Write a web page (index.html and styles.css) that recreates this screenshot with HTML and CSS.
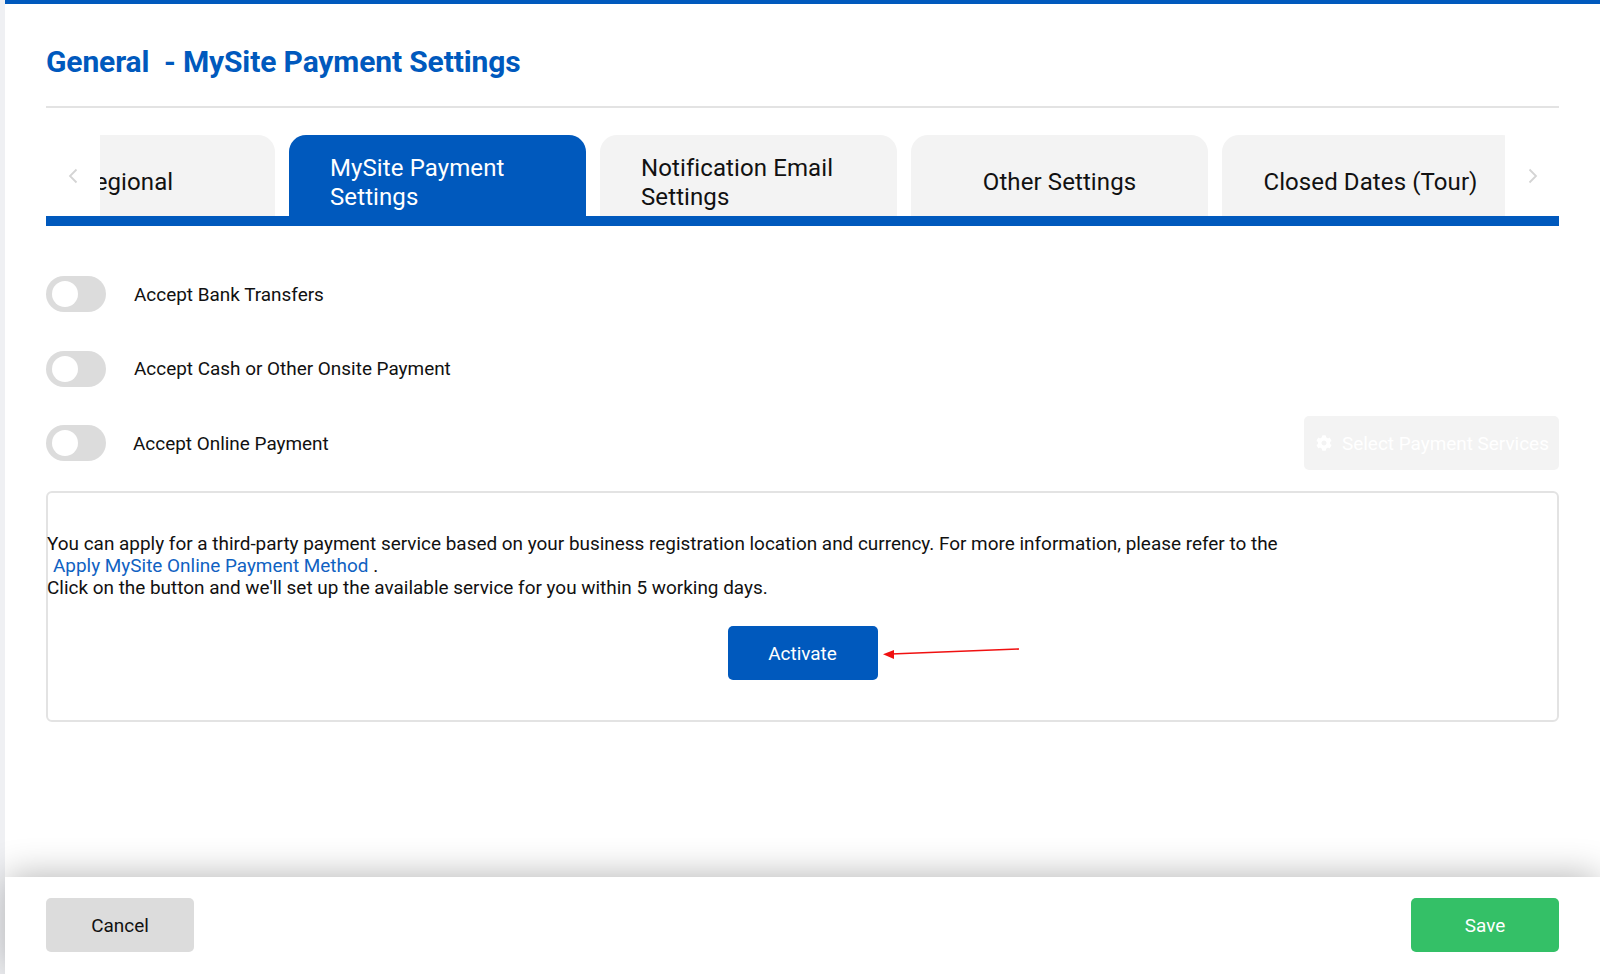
FILE: index.html
```html
<!DOCTYPE html>
<html lang="en">
<head>
  <meta charset="UTF-8" />
  <meta name="viewport" content="width=device-width, initial-scale=1.0"/>
  <title>MySite Payment Settings</title>
  <link rel="stylesheet" href="styles.css">
</head>
<body>
  <div class="panel">
    <div class="content">
      <h1 class="title">General &nbsp;- MySite Payment Settings</h1>

      <div class="tabs">
        <button class="tab-arrow">
          <svg width="10" height="16" viewBox="0 0 10 16"><path d="M8.5 1.5 2 8l6.5 6.5" fill="none" stroke="#d4d4d4" stroke-width="1.8"/></svg>
        </button>
        <div class="tab-window">
          <div class="tab-track">
            <div class="tab">Regional</div>
            <div class="tab active"><span>MySite Payment Settings</span></div>
            <div class="tab"><span>Notification Email Settings</span></div>
            <div class="tab">Other Settings</div>
            <div class="tab">Closed Dates (Tour)</div>
          </div>
        </div>
        <button class="tab-arrow">
          <svg width="10" height="16" viewBox="0 0 10 16"><path d="M1.5 1.5 8 8l-6.5 6.5" fill="none" stroke="#d4d4d4" stroke-width="1.8"/></svg>
        </button>
      </div>

      <div class="option">
        <span class="toggle"></span>
        <label>Accept Bank Transfers</label>
      </div>
      <div class="option">
        <span class="toggle"></span>
        <label>Accept Cash or Other Onsite Payment</label>
      </div>
      <div class="option online">
        <span class="toggle"></span>
        <label>Accept Online Payment</label>
        <button class="select-btn">
          <svg width="16" height="16" viewBox="0 0 512 512"><path fill="#fff" d="M487.4 315.7l-42.6-24.6c4.3-23.2 4.3-47 0-70.2l42.6-24.6c4.9-2.8 7.1-8.6 5.5-14-11.1-35.6-30-67.8-54.7-94.6-3.8-4.1-10-5.1-14.8-2.3L380.8 110c-17.9-15.4-38.5-27.3-60.8-35.1V25.8c0-5.6-3.9-10.5-9.4-11.7-36.7-8.2-74.3-7.8-109.2 0-5.5 1.2-9.4 6.1-9.4 11.7V75c-22.2 7.9-42.8 19.8-60.8 35.1L88.7 85.5c-4.9-2.8-11-1.9-14.8 2.3-24.7 26.7-43.6 58.9-54.7 94.6-1.7 5.4.6 11.2 5.5 14L67.3 221c-4.3 23.2-4.3 47 0 70.2l-42.6 24.6c-4.9 2.8-7.1 8.6-5.5 14 11.1 35.6 30 67.8 54.7 94.6 3.8 4.1 10 5.1 14.8 2.3l42.6-24.6c17.9 15.4 38.5 27.3 60.8 35.1v49.2c0 5.6 3.9 10.5 9.4 11.7 36.7 8.2 74.3 7.8 109.2 0 5.5-1.2 9.4-6.1 9.4-11.7v-49.2c22.2-7.9 42.8-19.8 60.8-35.1l42.6 24.6c4.9 2.8 11 1.9 14.8-2.3 24.7-26.7 43.6-58.9 54.7-94.6 1.5-5.5-.7-11.3-5.6-14.1zM256 336c-44.1 0-80-35.9-80-80s35.9-80 80-80 80 35.9 80 80-35.9 80-80 80z"/></svg>
          Select Payment Services
        </button>
      </div>

      <div class="info-box">
        <p class="info-text">
          You can apply for a third-party payment service based on your business registration location and currency. For more information, please refer to the<br>
          <a class="info-link" href="#">Apply MySite Online Payment Method</a> .<br>
          Click on the button and we'll set up the available service for you within 5 working days.
        </p>
        <div class="activate-row">
          <button class="btn activate">Activate</button>
        </div>
        <svg class="arrow" width="142" height="20" viewBox="0 0 142 20">
          <path d="M138 4 10 9" stroke="#f01010" stroke-width="1.6" fill="none"/>
          <path d="M2 9.3 13 5v9z" fill="#f01010"/>
        </svg>
      </div>
    </div>

    <div class="footer">
      <button class="btn cancel">Cancel</button>
      <button class="btn save">Save</button>
    </div>
  </div>
</body>
</html>
```

FILE: styles.css
```css
* {
  box-sizing: border-box;
}
body {
  margin: 0;
  font-family: Roboto, "Liberation Sans", sans-serif;
  background: #eff0f3;
  color: #111;
}
button {
  font-family: inherit;
  border: none;
}
.panel {
  margin-left: 5px;
  height: 974px;
  background: #fff;
  border-top: 4px solid #0059bd;
  display: flex;
  flex-direction: column;
}
.content {
  flex: 1;
  padding: 0 41px;
}
.title {
  margin: 0;
  height: 104px;
  padding-top: 40px;
  border-bottom: 2px solid #e3e3e3;
  color: #0059bd;
  font-size: 30px;
  line-height: 36px;
  font-weight: 700;
  letter-spacing: -0.13px;
}
.tabs {
  display: flex;
  margin-top: 27px;
  border-bottom: 10px solid #0059bd;
}
.tab-arrow {
  flex: 0 0 54px;
  background: none;
  padding: 0;
  display: flex;
  align-items: center;
  justify-content: center;
}
.tab-arrow:last-child {
  padding-left: 1px;
}
.tab-window {
  flex: 1;
  overflow: hidden;
}
.tab-track {
  display: flex;
  gap: 14px;
  margin-left: -122px;
}
.tab {
  flex: 0 0 297px;
  height: 81px;
  padding: 14px 41px 0;
  background: #f3f3f3;
  border-radius: 17px 17px 0 0;
  display: flex;
  align-items: center;
  justify-content: center;
  font-size: 24px;
  line-height: 28.5px;
  letter-spacing: 0.1px;
  color: #111;
  white-space: nowrap;
}
.tab span {
  width: 100%;
  white-space: normal;
}
.tab.active {
  background: #0059bd;
  color: #fff;
}
.option {
  display: flex;
  align-items: center;
  height: 36px;
  font-size: 18.93px;
  margin-top: 38.5px;
}
.tabs + .option {
  margin-top: 50px;
}
.option label {
  margin-left: 28px;
}
.option.online {
  height: 54px;
  margin-top: 29px;
}
.option.online label {
  margin-left: 27px;
  padding-top: 1px;
}
.toggle {
  width: 60px;
  height: 36px;
  border-radius: 18px;
  background: #dcdcdc;
  padding: 5px 6px;
}
.toggle::before {
  content: "";
  display: block;
  width: 26px;
  height: 26px;
  border-radius: 50%;
  background: #fff;
}
.select-btn {
  margin-left: auto;
  width: 255px;
  height: 54px;
  padding: 1px 0 0 12px;
  background: #f3f3f3;
  border-radius: 5px;
  color: #fff;
  font-size: 18.93px;
  display: flex;
  align-items: center;
  gap: 10px;
}
.info-box {
  position: relative;
  margin-top: 21px;
  height: 231px;
  border: 2px solid #e3e3e3;
  border-radius: 6px;
  padding-top: 40px;
}
.info-text {
  margin: 0 0 0 -1px;
  font-size: 18.93px;
  line-height: 22.4px;
}
.info-link {
  margin-left: 6px;
  color: #0f62c2;
  text-decoration: none;
}
.activate-row {
  display: flex;
  justify-content: center;
  margin-top: 26px;
}
.btn {
  width: 148px;
  height: 54px;
  padding: 1px 0 0;
  border-radius: 5px;
  font-size: 18.93px;
}
.activate {
  width: 150px;
  background: #0059bd;
  color: #fff;
}
.arrow {
  position: absolute;
  left: 833px;
  top: 152px;
}
.footer {
  flex: 0 0 97px;
  padding: 21px 41px 22px;
  background: #fff;
  display: flex;
  justify-content: space-between;
  box-shadow: 0 -3px 36px -2px rgba(0, 0, 0, 0.3);
  position: relative;
}
.cancel {
  background: #dcdcdc;
  color: #111;
}
.save {
  background: #34c067;
  color: #fff;
}
```
